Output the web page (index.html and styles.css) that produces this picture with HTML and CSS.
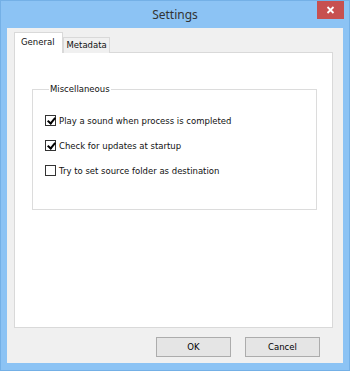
FILE: index.html
```html
<html>

<head>
    <link rel="stylesheet" href="styles.css">
</head>

<body>
    <div class="window">
        <!-- title bar -->
        <div class="titlebar">
            <span></span>
            <div class="title">Settings</div>
            <div class="close">
                <svg width="9" height="8" viewBox="0 0 9 8">
                    <path d="M1.5 1 L7.5 7 M7.5 1 L1.5 7" stroke="#fff" stroke-width="1.8" />
                </svg>
            </div>
        </div>
        <!-- client area -->
        <div class="client">
            <ul class="tabs">
                <li class="active">General</li>
                <li>Metadata</li>
            </ul>
            <div class="panel">
                <fieldset class="group">
                    <legend>Miscellaneous</legend>
                    <label class="check"><span class="box checked"></span>Play a sound when process is completed</label>
                    <label class="check"><span class="box checked"></span>Check for updates at startup</label>
                    <label class="check"><span class="box"></span>Try to set source folder as destination</label>
                </fieldset>
            </div>
            <div class="buttons">
                <button class="btn">OK</button>
                <button class="btn">Cancel</button>
            </div>
        </div>
    </div>
</body>

</html>
```

FILE: styles.css
```css
* {
    margin: 0;
    padding: 0;
    box-sizing: border-box;
}

body {
    font-family: "DejaVu Sans", sans-serif;
    font-size: 8.5px;
    color: #111;
}

.window {
    width: 350px;
    height: 371px;
    background: #8cc3f4;
    border: 1px solid #74b0e6;
    padding: 0 6px 7px 6px;
}

/*title bar*/

.titlebar {
    height: 27px;
    display: grid;
    grid-template-columns: 1fr auto 1fr;
}

.title {
    font-family: "Noto Sans", sans-serif;
    font-size: 12px;
    color: #333;
    line-height: 28px;
}

.close {
    justify-self: end;
    width: 27px;
    height: 18px;
    margin-right: -1px;
    background: #c75050;
    display: flex;
    align-items: center;
    justify-content: center;
}

.client {
    height: 335px;
    background: #f0f0f0;
    padding: 4px 10px 0 7px;
}

/*tabs*/

.tabs {
    list-style-type: none;
    display: flex;
    align-items: flex-end;
    height: 20px;
    position: relative;
    z-index: 1;
}

.tabs li {
    height: 16px;
    line-height: 15px;
    padding: 0 2px 0 3px;
    border: 1px solid #d9d9d9;
    border-bottom: 0 none;
    background: #f0f0f0;
    margin-bottom: -1px;
}

.tabs li.active {
    height: 21px;
    line-height: 18px;
    padding: 0 7px 0 6px;
    background: #fff;
}

.panel {
    height: 276px;
    background: #fff;
    border: 1px solid #d9d9d9;
    padding: 29px 15px 0 17px;
}

/*group box*/

.group {
    border: 1px solid #dcdcdc;
    height: 128px;
    padding: 12px 0 0 12px;
}

.group legend {
    margin-left: 4px;
    padding: 0 1px;
    line-height: 14px;
}

.check {
    display: flex;
    align-items: center;
    height: 25px;
}

.box {
    width: 11px;
    height: 11px;
    border: 1px solid #333;
    background: #fff;
    margin-right: 3px;
    position: relative;
}

.box.checked:after {
    content: '';
    position: absolute;
    left: 2.5px;
    top: 0;
    width: 3px;
    height: 6px;
    border: solid #000;
    border-width: 0 2px 2px 0;
    transform: rotate(40deg);
}

/*buttons*/

.buttons {
    display: flex;
    justify-content: flex-end;
    gap: 14px;
    padding: 9px 13px 0 0;
}

.btn {
    width: 75px;
    height: 20px;
    font-family: inherit;
    font-size: 8.5px;
    background: #e5e5e5;
    border: 1px solid #acacac;
    color: #000;
}
```
